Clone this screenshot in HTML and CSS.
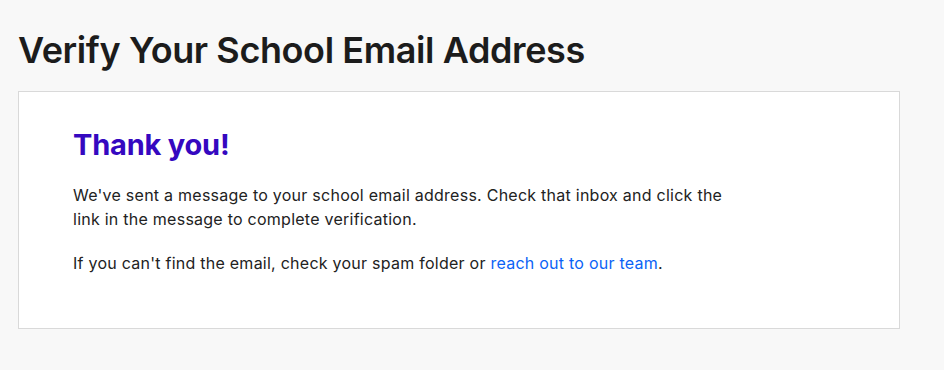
FILE: index.html
```html
<!DOCTYPE html>
<html lang="en">
<head>
    <meta charset="UTF-8">
    <meta name="viewport" content="width=device-width, initial-scale=1.0">
    <title>Verify Your School Email Address</title>
    <link rel="stylesheet" href="styles.css">
</head>
<body>
    <main class="page">
        <h1 class="page-title">Verify Your School Email Address</h1>
        <section class="card">
            <h2 class="card-title">Thank you!</h2>
            <p class="card-text">We've sent a message to your school email address. Check that inbox and click the link in the message to complete verification.</p>
            <p class="card-text">If you can't find the email, check your spam folder or <a href="#" class="link">reach out to our team</a>.</p>
        </section>
    </main>
</body>
</html>
```

FILE: styles.css
```css
body {
    margin: 0;
    background: #f8f8f8;
    font-family: Inter, "Liberation Sans", sans-serif;
    color: #222;
}
.page {
    padding: 28px 18px 0;
    width: 882px;
}
.page-title {
    font-family: Inter, sans-serif;
    font-size: 36px;
    font-weight: 600;
    letter-spacing: -0.4px;
    line-height: 44px;
    margin: 0 0 19px;
    color: #1c1c1c;
}
.card {
    background: #fff;
    border: 1px solid #d9d9d9;
    padding: 35px 54px 53px;
}
.card-title {
    font-size: 29px;
    font-weight: 700;
    line-height: 36px;
    margin: 0 0 20px;
    color: #3508c0;
    letter-spacing: -0.2px;
}
.card-text {
    font-size: 16px;
    line-height: 24px;
    letter-spacing: 0.25px;
    margin: 0 0 20px;
    max-width: 660px;
}
.card-text:last-child {
    margin-bottom: 0;
}
.link {
    color: #0b63f6;
    text-decoration: none;
}
```
